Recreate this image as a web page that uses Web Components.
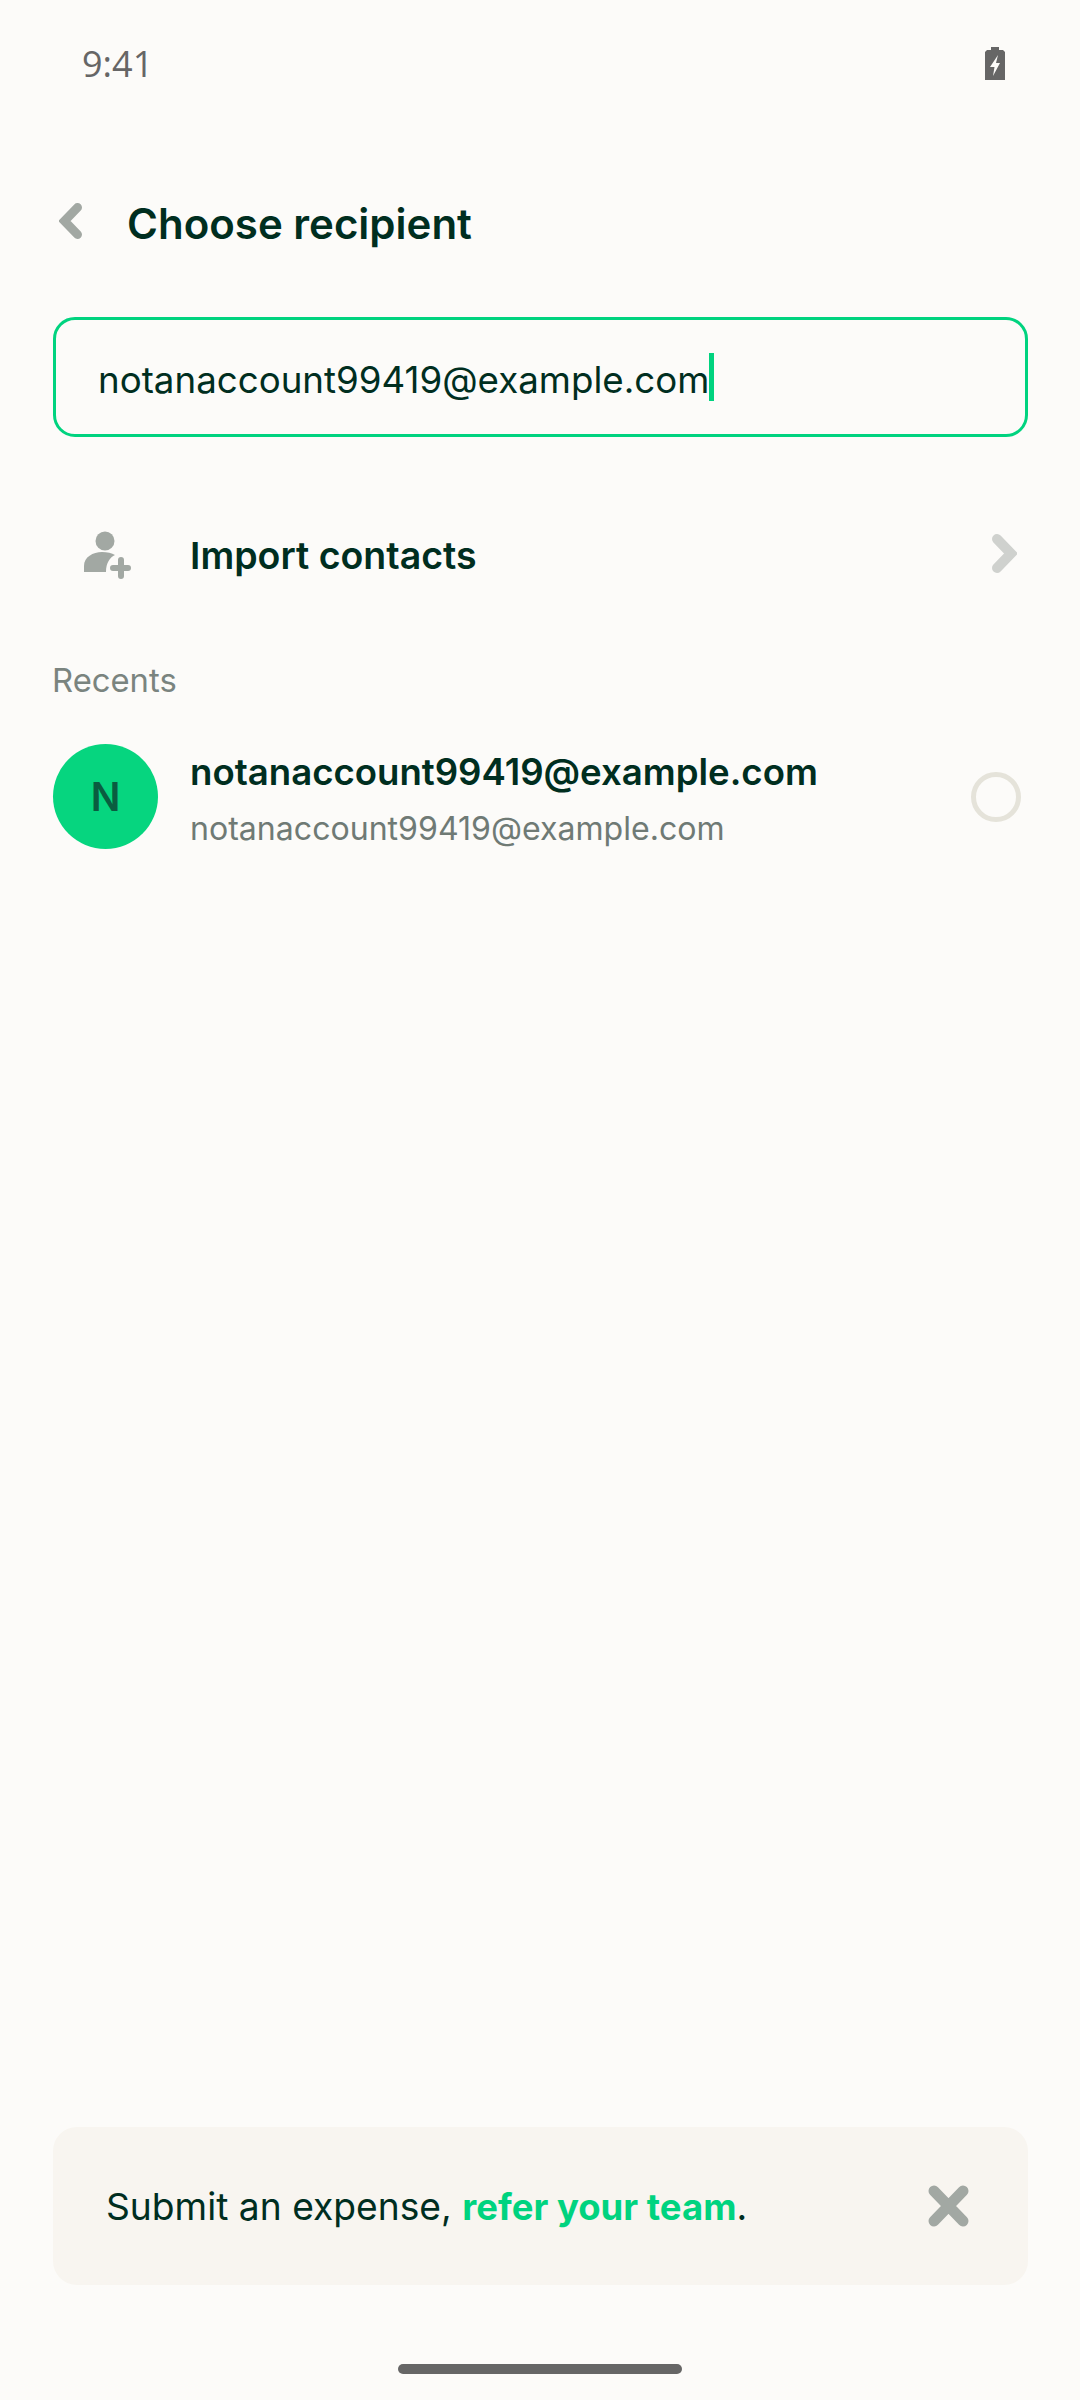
<!DOCTYPE html>
<html>
<head>
<meta charset="utf-8">
<title>Choose recipient</title>
<style>
	html, body { margin: 0; padding: 0; }
	body { background: #fcfbf9; color: #002e1f; font-family: Inter, "Liberation Sans", sans-serif; }
</style>
</head>
<body>
<app-screen>
	<status-bar time="9:41"></status-bar>
	<page-header title="Choose recipient"></page-header>
	<search-field value="notanaccount99419@example.com"></search-field>
	<import-row label="Import contacts"></import-row>
	<section-label>Recents</section-label>
	<contact-row initial="N" name="notanaccount99419@example.com" detail="notanaccount99419@example.com"></contact-row>
	<promo-banner>Submit an expense, <b slot="link">refer your team</b></promo-banner>
	<home-bar></home-bar>
</app-screen>

<script>
class AppScreen extends HTMLElement
{
	constructor ()
	{
		super();
		this.attachShadow({mode:"open"});
		this.shadowRoot.innerHTML = `
			<style>
				:host {
					display: flex;
					flex-direction: column;
					height: 2400px;
					overflow: hidden;
				}
			</style>
			<slot></slot>
		`;
	}
}

class StatusBar extends HTMLElement
{
	constructor ()
	{
		super();
		this.attachShadow({mode:"open"});
		this.shadowRoot.innerHTML = `
			<style>
				:host {
					display: flex;
					justify-content: space-between;
					align-items: center;
					height: 127px;
					padding: 0 75px 0 82px;
					box-sizing: border-box;
				}
				span {
					font: 400 36px "Open Sans", sans-serif;
					color: #666;
				}
				svg { display: block; }
			</style>
			<span></span>
			<svg width="20" height="33" viewBox="0 0 20 33">
				<path fill="#666" d="M6 0h8v3h4l2 2v28H0V5l2-2h4z"/>
				<path fill="#fcfbf9" d="M13 8 5 20h4.500L8 29l7-13h-4z"/>
			</svg>
		`;
		this.shadowRoot.querySelector("span").textContent = this.getAttribute("time");
	}
}

class PageHeader extends HTMLElement
{
	constructor ()
	{
		super();
		this.attachShadow({mode:"open"});
		this.shadowRoot.innerHTML = `
			<style>
				:host {
					display: flex;
					align-items: center;
					height: 70px;
					padding: 0 0 0 59px;
					margin-top: 61px;
				}
				svg { display: block; margin-right: 45px; margin-top: -4px; }
				h1 {
					margin: 0;
					font: 600 42px Inter, sans-serif;
					color: #002e1f;
				}
			</style>
			<svg width="23" height="36" viewBox="0 0 23 36">
				<path fill="none" stroke="#a2a8a3" stroke-width="9" stroke-linecap="round" d="M18.500 4.500 5.500 18l13 13.500"/>
			</svg>
			<h1></h1>
		`;
		this.shadowRoot.querySelector("h1").textContent = this.getAttribute("title");
	}
}

class SearchField extends HTMLElement
{
	constructor ()
	{
		super();
		this.attachShadow({mode:"open"});
		this.shadowRoot.innerHTML = `
			<style>
				:host {
					display: flex;
					align-items: center;
					height: 120px;
					box-sizing: border-box;
					margin: 59px 52px 0 53px;
					padding-left: 42px;
					border: 3px solid #00d37f;
					border-radius: 22px;
					font: 400 36.700px Inter, sans-serif;
					color: #002e1f;
				}
				span { position: relative; top: 2px; }
				i {
					display: block;
					width: 5px;
					height: 48px;
					background: #00d37f;
				}
			</style>
			<span></span><i></i>
		`;
		this.shadowRoot.querySelector("span").textContent = this.getAttribute("value");
	}
}

class ImportRow extends HTMLElement
{
	constructor ()
	{
		super();
		this.attachShadow({mode:"open"});
		this.shadowRoot.innerHTML = `
			<style>
				:host {
					display: flex;
					align-items: center;
					height: 60px;
					margin-top: 88px;
					padding: 0 63px 0 84px;
				}
				svg { display: block; }
				.label {
					flex: 1;
					margin-left: 59px;
					font: 600 37.500px Inter, sans-serif;
					color: #002e1f;
				}
				.chevron { margin-top: -4px; }
			</style>
			<svg width="47" height="48" viewBox="0 0 47 48">
				<circle cx="21" cy="10" r="9.500" fill="#a2a8a3"/>
				<path fill="#a2a8a3" d="M0 41v-6c0-9 9-14 18-14 5 0 10 1 13 3-5 2-9 8-9 17z"/>
				<path fill="none" stroke="#a2a8a3" stroke-width="6" stroke-linecap="round" d="M37 29v16M29 37h15"/>
			</svg>
			<span class="label"></span>
			<svg class="chevron" width="25" height="39" viewBox="0 0 25 39">
				<path fill="none" stroke="#cfd1ce" stroke-width="10" stroke-linecap="round" d="M5 5l14 14.500L5 34"/>
			</svg>
		`;
		this.shadowRoot.querySelector(".label").textContent = this.getAttribute("label");
	}
}

class SectionLabel extends HTMLElement
{
	constructor ()
	{
		super();
		this.attachShadow({mode:"open"});
		this.shadowRoot.innerHTML = `
			<style>
				:host {
					display: block;
					margin: 75px 0 1px 52px;
					font: 400 32.800px Inter, sans-serif;
					line-height: 40px;
					color: #7a847f;
				}
			</style>
			<slot></slot>
		`;
	}
}

class ContactRow extends HTMLElement
{
	constructor ()
	{
		super();
		this.attachShadow({mode:"open"});
		this.shadowRoot.innerHTML = `
			<style>
				:host {
					display: flex;
					align-items: center;
					margin-top: 43px;
					padding: 0 59px 0 53px;
				}
				.avatar {
					display: flex;
					align-items: center;
					justify-content: center;
					flex: none;
					width: 105px;
					height: 105px;
					border-radius: 50%;
					background: #06d57f;
					font: 600 39px Inter, sans-serif;
					color: #0a5c40;
				}
				.text { flex: 1; margin-left: 32px; padding-top: 6px; }
				.name {
					font: 600 36.600px/44px Inter, sans-serif;
					color: #002e1f;
				}
				.detail {
					margin-top: 15px;
					font: 400 32.100px/40px Inter, sans-serif;
					color: #6f7a75;
				}
				.radio {
					flex: none;
					width: 50px;
					height: 50px;
					box-sizing: border-box;
					border: 5px solid #e5e3da;
					border-radius: 50%;
				}
			</style>
			<div class="avatar"></div>
			<div class="text"><div class="name"></div><div class="detail"></div></div>
			<div class="radio"></div>
		`;
		let root = this.shadowRoot;
		root.querySelector(".avatar").textContent = this.getAttribute("initial");
		root.querySelector(".name").textContent = this.getAttribute("name");
		root.querySelector(".detail").textContent = this.getAttribute("detail");
	}
}

class PromoBanner extends HTMLElement
{
	constructor ()
	{
		super();
		this.attachShadow({mode:"open"});
		this.shadowRoot.innerHTML = `
			<style>
				:host {
					display: flex;
					align-items: center;
					justify-content: space-between;
					height: 158px;
					box-sizing: border-box;
					margin: auto 52px 0 53px;
					padding: 0 59px 0 53px;
					border-radius: 24px;
					background: #f8f5f0;
					font: 400 37.200px Inter, sans-serif;
					color: #002e1f;
				}
				::slotted(b) { font-size: 36.500px; font-weight: 700; color: #00d37f; }
				svg { display: block; }
			</style>
			<span><slot></slot><slot name="link"></slot>.</span>
			<svg width="41" height="42" viewBox="0 0 41 42">
				<path fill="none" stroke="#a2a8a3" stroke-width="11" stroke-linecap="round" d="M6 6l29 30M35 6 6 36"/>
			</svg>
		`;
	}
}

class HomeBar extends HTMLElement
{
	constructor ()
	{
		super();
		this.attachShadow({mode:"open"});
		this.shadowRoot.innerHTML = `
			<style>
				:host {
					display: block;
					width: 284px;
					height: 10px;
					margin: 79px auto 26px;
					border-radius: 5px;
					background: #666;
				}
			</style>
		`;
	}
}

customElements.define("app-screen", AppScreen);
customElements.define("status-bar", StatusBar);
customElements.define("page-header", PageHeader);
customElements.define("search-field", SearchField);
customElements.define("import-row", ImportRow);
customElements.define("section-label", SectionLabel);
customElements.define("contact-row", ContactRow);
customElements.define("promo-banner", PromoBanner);
customElements.define("home-bar", HomeBar);
</script>
</body>
</html>
